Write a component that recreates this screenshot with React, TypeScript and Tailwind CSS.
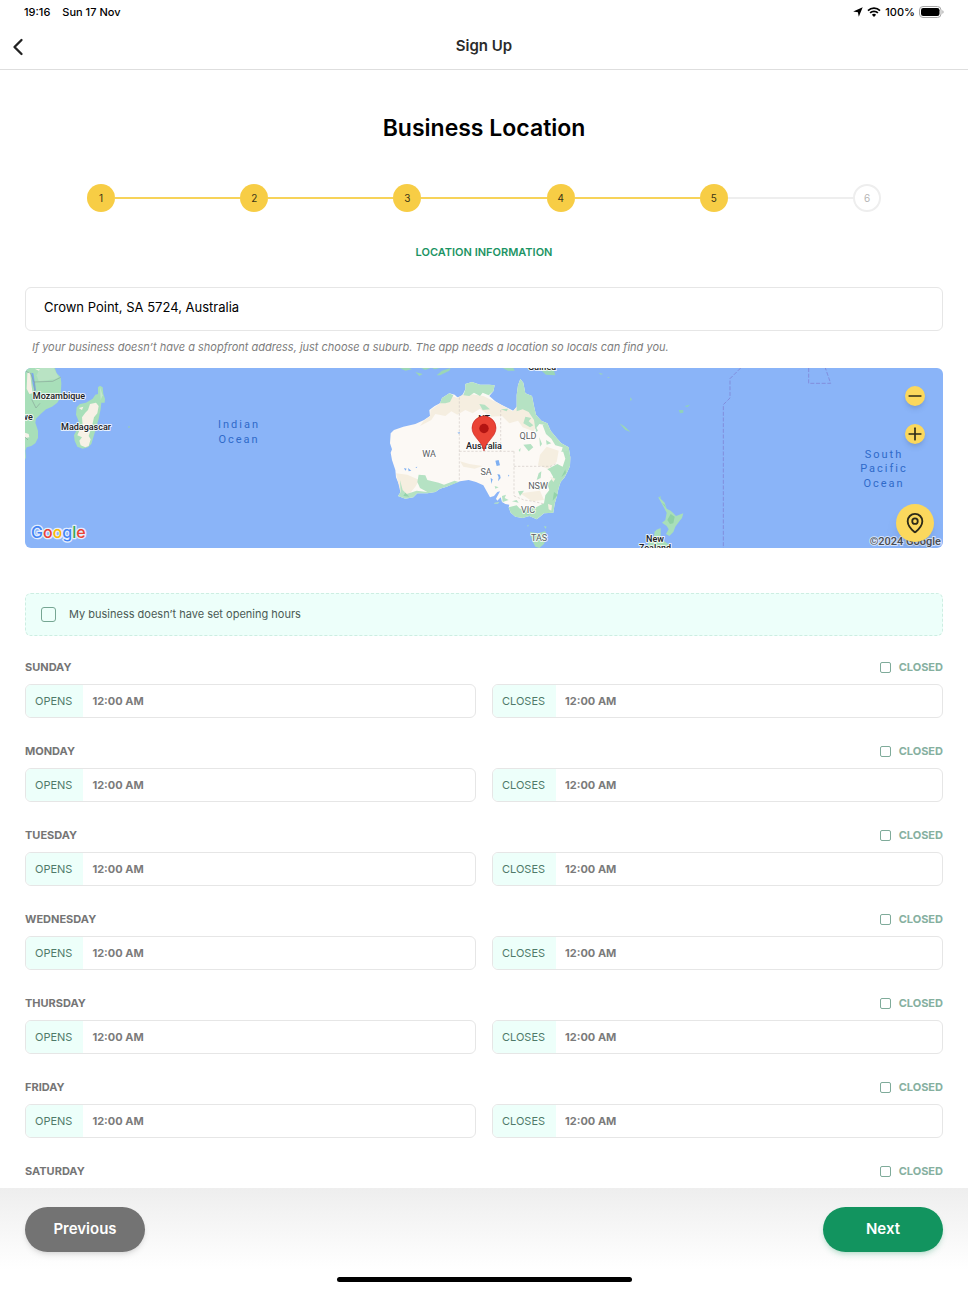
import React, { useState } from "react";
import { ChevronLeft, MapPin, Minus, Plus } from "lucide-react";

const DAYS = [
  "Sunday",
  "Monday",
  "Tuesday",
  "Wednesday",
  "Thursday",
  "Friday",
  "Saturday",
];

const TOTAL_STEPS = 6;
const CURRENT_STEP = 5;

function StatusBar() {
  return (
    <div className="flex h-6 shrink-0 items-center justify-between px-6 text-[11px] font-medium text-black">
      <div className="flex gap-3">
        <span>19:16</span>
        <span>Sun 17 Nov</span>
      </div>
      <div className="flex items-center gap-1">
        <svg width="10" height="10" viewBox="0 0 10 10" aria-hidden="true">
          <path d="M9.700.3 5.800 9.700 4.900 5.200.2 4.500z" fill="#000" />
        </svg>
        <svg width="14" height="10" viewBox="0 0 14 10" aria-hidden="true">
          <path
            d="M1 3.6a8.6 8.6 0 0 1 12 0M3.1 5.9a5.6 5.6 0 0 1 7.8 0"
            fill="none"
            stroke="#000"
            strokeWidth="1.7"
          />
          <path d="M4.9 7.7a3 3 0 0 1 4.2 0L7 9.9z" fill="#000" />
        </svg>
        <span>100%</span>
        <svg width="25" height="12" viewBox="0 0 25 12" aria-hidden="true">
          <rect
            x=".5"
            y=".5"
            width="21.5"
            height="11"
            rx="3.5"
            fill="none"
            stroke="#a8a8a8"
          />
          <rect x="2" y="2" width="18.5" height="8" rx="2.2" fill="#000" />
          <path d="M23.4 4.3v3.4c.8-.3 1.2-1 1.2-1.7s-.4-1.4-1.2-1.7z" fill="#a8a8a8" />
        </svg>
      </div>
    </div>
  );
}

function Stepper() {
  const steps = Array.from({ length: TOTAL_STEPS }, (_, i) => i + 1);

  return (
    <ol className="mt-10 flex items-center px-[62px]">
      {steps.map((step) => {
        const done = step <= CURRENT_STEP;
        return (
          <React.Fragment key={step}>
            {step > 1 && (
              <li
                aria-hidden="true"
                className={`h-0.5 flex-1 ${done ? "bg-[#f7d359]" : "bg-[#eeeeee]"}`}
              />
            )}
            <li
              className={`flex size-7 items-center justify-center rounded-full text-[10px] ${
                done
                  ? "bg-[#f7cd45] text-[#3d3616]"
                  : "border-2 border-[#eeeeee] bg-white text-[#b5b5b5]"
              }`}
            >
              {step}
            </li>
          </React.Fragment>
        );
      })}
    </ol>
  );
}

function MapDrawing() {
  return (
    <svg
      className="block h-full w-full font-[Roboto,sans-serif]"
      viewBox="0 0 918 180"
      preserveAspectRatio="xMidYMid slice"
      role="img"
      aria-label="Map of Australia"
    >
      <rect width="918" height="180" fill="#8ab4f8" />

      {/* Mozambique and Madagascar */}
      <g transform="translate(-5 -88) scale(.33333)">
        <path
          d="M14 262H104L110 280 122 292 124 310 122 350 112 368 96 380 78 388 62 402 48 416 46 428 54 452 54 474 46 490 34 498 20 502 16 512 18 532 14 542z"
          fill="#a8dfb9"
        />
        <path d="M60 264 100 262 116 292 104 298 56 304 50 286z" fill="#b9e3c4" />
        <path d="M22 280 30 276 34 312 38 340 28 342 20 326z" fill="#f5efe4" />
        <path d="M14 458 26 462 28 472 14 474zM44 266 60 268 56 272z" fill="#f8f3ea" />
        <path d="M34 278 40 280 44 304 48 330 44 336 38 312z" fill="#7aa7ee" />
        <path
          d="M18 274 32 280 42 306 98 304 122 292M44 306 44 340 36 360 48 384 60 370M14 470 24 480"
          fill="none"
          stroke="#8aa79a"
          strokeWidth="2"
        />
        <path
          d="M240 317 248 322 250 342 255 356 254 368 244 368 242 388 236 416 226 452 214 492 204 502 188 506 172 500 164 482 162 466 172 446 176 424 168 404 170 382 180 372 198 368 218 356 226 344 234 342 234 322z"
          fill="#a8dfb9"
        />
        <path
          d="M210 372 228 368 236 378 232 400 222 412 218 430 212 450 206 468 212 478 206 498 196 502 182 496 178 482 186 472 172 466 180 448 188 436 186 412 196 398 204 390zM176 384 190 380 186 390z"
          fill="#f7f1e6"
        />
        <path d="M240 322 248 346 242 360z" fill="#c4e6cb" />
        <circle cx="327" cy="441" r="3" fill="#93c9c4" />
      </g>

      {/* Australia, Tasmania and the islands to the north */}
      <g transform="translate(315 -8) scale(.33333)">
        <path
          d="M541 57 550 68 556 100 576 108 582 138 588 164 604 182 622 190 632 212 650 234 664 250 686 262 691 292 690 318 682 336 674 352 662 366 656 384 650 410 644 432 640 458 612 460 600 470 590 478 568 468 548 474 526 470 512 458 506 442 508 434 496 432 486 426 482 412 472 422 468 416 480 394 472 396 462 408 450 412 440 394 430 376 408 366 386 360 360 364 338 372 320 380 300 386 286 396 262 400 232 400 220 412 196 416 174 408 182 396 178 376 168 352 166 330 156 300 152 278 156 268 150 250 152 220 162 210 190 200 226 192 252 180 270 168 268 150 284 138 300 130 306 114 328 100 344 104 352 112 366 108 376 88 376 72 396 66 420 74 448 74 464 76 460 94 448 108 466 124 484 134 504 144 520 152 530 140 530 106 534 76z"
          fill="#fcf9f5"
        />
        <path
          d="M300 130 326 104 352 114 374 100 430 108 468 126 518 154 540 130 580 150 600 186 580 214 548 202 534 182 508 190 486 168 452 170 420 146 398 160 376 150 352 164 334 154 316 168 286 162 274 180 240 198 250 184 270 168 272 150zM168 340 202 344 238 360 226 380 206 404 182 400zM360 304 388 312 428 318 404 326 370 320zM620 260 656 272 650 306 624 326 594 316 600 284zM540 400 600 392 612 420 576 424z"
          fill="#f5eee0"
        />
        <path
          d="M541 57 550 68 556 100 576 108 582 138 588 164 604 182 622 190 620 196 598 192 586 208 582 180 566 156 548 148 530 154 530 106 534 76zM376 88 376 72 396 66 420 74 448 74 464 76 460 94 446 106 428 98 420 108 402 98 388 108 370 106zM300 130 306 114 328 100 340 106 330 126 316 130zM418 132 434 134 450 148 428 150zM482 148 504 146 500 154z"
          fill="#b5e2c3"
        />
        <path
          d="M686 262 691 292 690 318 682 336 674 352 662 366 656 384 650 410 644 432 640 458 612 460 590 478 568 468 548 474 526 470 512 458 506 442 530 436 540 446 584 444 612 430 616 406 628 390 622 372 640 352 630 334 622 328 652 312 668 320 676 296 668 270z"
          fill="#b1e1bf"
        />
        <path
          d="M622 190 632 212 650 234 664 250 686 262 684 272 664 276 668 262 646 256 634 236 618 222 608 196zM180 360 188 390 200 402 230 392 262 396 240 384 232 366 236 344 256 346 262 360 296 368 312 374 344 362 356 366 320 380 300 386 286 396 262 400 232 400 220 412 196 416 174 408 182 396zM556 170 574 174 566 184 580 196 570 202 550 190zM550 254 572 252 580 262 566 274zM596 340 604 334 602 354 590 360zM608 376 588 384 598 390zM486 408 498 404 494 414 506 420 488 426zM534 394 552 392 540 408zM516 424 530 420 536 428zM598 232 606 252 600 260zM618 240 634 250 620 254zM536 270 542 264 540 276zM464 378 476 382 466 386zM586 198 594 212 588 216z"
          fill="#b5e2c3"
        />
        <path
          d="M624 432 636 436 634 452 626 448zM630 350 646 356 640 366z"
          fill="#f5efe2"
        />
        <path
          d="M654 404 638 422 642 396zM664 352 676 328 678 340zM552 462 560 454 568 464zM208 410 190 408 196 398z"
          fill="#93d3aa"
        />
        <path
          d="M466 302 476 300 480 316 470 318zM472 342 480 344 482 354 474 364 476 352zM452 354 458 358 454 372zM438 162 444 164 440 168zM352 218 360 216 358 222zM192 324 200 326 196 332zM204 324 214 332 206 334zM226 322 232 320 230 324zM504 344 508 346 506 350z"
          fill="#7fb0f2"
        />
        <path
          d="M358 112V360M358 274H522M482 150V274M522 274V408M522 319H632L650 310M522 408 552 420 580 424 612 432"
          fill="none"
          stroke="#d2cac6"
          strokeWidth="2"
          strokeDasharray="7 5"
        />
        <path d="M464 428 478 426 474 431 462 431z" fill="#b5e2c3" />
        <path
          d="M570 516 594 520 616 514 620 530 612 552 598 564 586 560 576 540zM612 498 620 500 616 506zM562 496 566 494 564 502z"
          fill="#a8dfb9"
        />
        <path
          d="M180 24H208L216 28 196 32zM226 36 248 42 238 48zM290 46 306 32 332 24 328 32 300 46zM244 24H272L256 30zM276 24H300L284 28zM488 24H520L524 32 504 32zM570 24H640L646 46 618 44 600 28zM870 112 876 118 872 124zM838 190 852 198 872 216 856 210zM776 38 790 42 782 44zM802 50 810 54 804 54zM956 412 962 408 962 424z"
          fill="#9bd6b6"
        />
        <path d="M948 510 962 504V528H946z" fill="#a8dfb9" />
      </g>

      {/* New Zealand, Fiji and the antimeridian */}
      <g transform="translate(615 -8) scale(.33333)">
        <path
          d="M54 410 66 420 74 428 80 446 92 452 100 460 108 468 130 460 126 474 118 484 106 500 100 516 88 528 78 522 86 508 80 498 66 488 76 480 80 458 68 436zM44 514 54 512 52 524 68 540 84 552 94 560V564H20L26 546 42 528z"
          fill="#a8dfb9"
        />
        <path d="M92 462 104 470 100 490 90 492 82 480zM66 428 74 434 78 444z" fill="#8fd1a5" />
        <path
          d="M116 150 130 150 130 158 120 160zM134 138 150 134 142 142z"
          fill="#8fd1bb"
        />
        <g fill="none" stroke="#7f86d6" strokeWidth="2.5" strokeDasharray="12 5">
          <path d="M302 24 270 56V114L250 134V564" />
          <path d="M506 24V70H572L556 24" />
        </g>
      </g>

      <g
        fontSize="9"
        fontWeight="500"
        fill="#202124"
        stroke="#ffffff"
        strokeWidth="2"
        strokeOpacity=".8"
        strokeLinejoin="round"
        paintOrder="stroke"
        textAnchor="middle"
      >
        <text x="34" y="31">Mozambique</text>
        <text x="2" y="52">we</text>
        <text x="61" y="62">Madagascar</text>
        <text x="459" y="54">NT</text>
        <text x="459" y="81">Australia</text>
        <text x="517" y="2">Guinea</text>
        <text x="630" y="174">New</text>
        <text x="630" y="183">Zealand</text>
      </g>
      <g
        fontSize="9"
        fill="#5b5f64"
        stroke="#ffffff"
        strokeWidth="2"
        strokeOpacity=".8"
        strokeLinejoin="round"
        paintOrder="stroke"
        textAnchor="middle"
      >
        <text x="404" y="89">WA</text>
        <text x="503" y="71">QLD</text>
        <text x="461" y="107">SA</text>
        <text x="513" y="121">NSW</text>
        <text x="503" y="145">VIC</text>
        <text x="514" y="173">TAS</text>
      </g>
      <g
        className="tracking-[2px]"
        fontSize="11"
        fill="#2f6ac9"
        textAnchor="middle"
      >
        <text x="214" y="60">Indian</text>
        <text x="214" y="75">Ocean</text>
        <text x="859" y="90">South</text>
        <text x="859" y="104">Pacific</text>
        <text x="859" y="119">Ocean</text>
      </g>

      <path
        d="M459 83C458 74 447 69 447 60a12 12 0 0 1 24 0C471 69 460 74 459 83z"
        fill="#ea4335"
        stroke="#c5221f"
        strokeWidth=".6"
      />
      <circle cx="459" cy="60.5" r="4.7" fill="#b31412" />
    </svg>
  );
}

function LocationMap() {
  return (
    <div className="relative mt-[13px] h-[180px] overflow-hidden rounded-md">
      <MapDrawing />
      <svg
        className="absolute bottom-0.5 left-1"
        width="60"
        height="24"
        viewBox="0 0 60 24"
        role="img"
        aria-label="Google"
      >
        <text
          x="2"
          y="16"
          fontSize="16"
          fontWeight="500"
          stroke="#e4edfd"
          strokeWidth="2.5"
          strokeLinejoin="round"
          paintOrder="stroke"
        >
          <tspan fill="#4285f4">G</tspan>
          <tspan fill="#ea4335">o</tspan>
          <tspan fill="#fbbc04">o</tspan>
          <tspan fill="#4285f4">g</tspan>
          <tspan fill="#34a853">l</tspan>
          <tspan fill="#ea4335">e</tspan>
        </text>
      </svg>
      <svg
        className="absolute right-0 bottom-0 font-[Roboto,sans-serif]"
        width="80"
        height="14"
        viewBox="0 0 80 14"
        role="img"
        aria-label="Copyright Google"
      >
        <text
          x="78"
          y="11"
          fontSize="11"
          fontWeight="500"
          fill="#4a4d52"
          stroke="#d6e4fc"
          strokeWidth="2"
          paintOrder="stroke"
          textAnchor="end"
        >
          ©2024 Google
        </text>
      </svg>
      <div className="absolute top-[18px] right-[18px] flex flex-col gap-[18px]">
        <button
          type="button"
          aria-label="Zoom out"
          className="flex size-5 items-center justify-center rounded-full bg-[#fbd85d] text-[#2d2a18] shadow-md"
        >
          <Minus size={20} strokeWidth={2} className="shrink-0" />
        </button>
        <button
          type="button"
          aria-label="Zoom in"
          className="flex size-5 items-center justify-center rounded-full bg-[#fbd85d] text-[#2d2a18] shadow-md"
        >
          <Plus size={20} strokeWidth={2} className="shrink-0" />
        </button>
      </div>
      <button
        type="button"
        aria-label="Use my location"
        className="absolute right-[9px] bottom-1.5 flex size-[38px] items-center justify-center rounded-full bg-[#fbd85d] text-[#2d2a18] shadow-lg"
      >
        <MapPin size={22} strokeWidth={2} />
      </button>
    </div>
  );
}

function TimeField({ id, label }: { id: string; label: string }) {
  return (
    <div className="flex h-[34px] flex-1 overflow-hidden rounded-md border border-[#e6e6e6] bg-white">
      <label
        htmlFor={id}
        className="flex items-center bg-[#edfffa] pr-[11px] pl-[9px] text-[11px] text-[#4f7a69]"
      >
        {label}
      </label>
      <input
        id={id}
        type="text"
        defaultValue="12:00 AM"
        className="min-w-0 flex-1 px-[9px] text-[11px] font-bold text-[#7b7b7b] outline-none"
      />
    </div>
  );
}

function DayHours({ day }: { day: string }) {
  const [closed, setClosed] = useState(false);
  const key = day.toLowerCase();

  return (
    <section className="h-[84px]">
      <div className="flex h-4 items-center justify-between">
        <h3 className="text-[11px] font-bold text-[#757575] uppercase">{day}</h3>
        <label className="flex items-center gap-2 text-[11px] font-bold text-[#86b09f]">
          <input
            type="checkbox"
            checked={closed}
            onChange={(e) => setClosed(e.target.checked)}
            className="size-[11px] appearance-none rounded-xs border border-[#7fab9a] bg-white checked:bg-[#12945f]"
          />
          CLOSED
        </label>
      </div>
      <div className="mt-[9px] flex gap-4">
        <TimeField id={`${key}-opens`} label="OPENS" />
        <TimeField id={`${key}-closes`} label="CLOSES" />
      </div>
    </section>
  );
}

export default function App() {
  const [address, setAddress] = useState("Crown Point, SA 5724, Australia");
  const [noSetHours, setNoSetHours] = useState(false);

  return (
    <div className="flex h-screen flex-col overflow-hidden bg-white font-[Inter,sans-serif]">
      <StatusBar />

      <header className="grid h-[46px] shrink-0 grid-cols-[40px_1fr_40px] items-center border-b border-[#dedede]">
        <button
          type="button"
          aria-label="Back"
          className="flex size-9 items-center justify-center text-[#222222]"
        >
          <ChevronLeft size={28} strokeWidth={2} />
        </button>
        <h1 className="text-center text-[15px] font-semibold text-[#2b2b2b]">Sign Up</h1>
      </header>

      <main className="min-h-0 flex-1 overflow-hidden px-[25px]">
        <h2 className="mt-[42px] text-center text-[23px] leading-8 font-semibold text-black">
          Business Location
        </h2>

        <Stepper />

        <h3 className="mt-8 text-center text-[11px] leading-4 font-semibold text-[#1c9464]">
          LOCATION INFORMATION
        </h3>

        <input
          type="text"
          aria-label="Business address"
          value={address}
          onChange={(e) => setAddress(e.target.value)}
          className="mt-[27px] block h-11 w-full rounded-md border border-[#e6e6e6] px-[18px] pb-1 text-[13px] text-black outline-none"
        />
        <p className="mt-2 px-[7px] text-[11px] leading-4 text-[#7d7d7d] italic">
          If your business doesn’t have a shopfront address, just choose a suburb. The app
          needs a location so locals can find you.
        </p>

        <LocationMap />

        <label className="mt-[45px] flex h-[43px] items-center gap-[13px] rounded-md border border-dashed border-[#cdeee2] bg-[#edfffa] px-[15px] text-[11px] text-[#4a5a54]">
          <input
            type="checkbox"
            checked={noSetHours}
            onChange={(e) => setNoSetHours(e.target.checked)}
            className="size-[15px] appearance-none rounded-[3px] border border-[#76a693] checked:bg-[#12945f]"
          />
          My business doesn’t have set opening hours
        </label>

        <div className="mt-[23px]">
          {DAYS.map((day) => (
            <DayHours key={day} day={day} />
          ))}
        </div>
      </main>

      <footer className="flex h-[102px] shrink-0 flex-col items-center justify-between bg-linear-to-b from-[#eeeeee] to-white to-80% px-[25px] pt-[19px] pb-2">
        <div className="flex w-full justify-between">
          <button
            type="button"
            className="h-[45px] w-[120px] rounded-full bg-[#737373] text-[15px] font-semibold text-white shadow-md"
          >
            Previous
          </button>
          <button
            type="button"
            className="h-[45px] w-[120px] rounded-full bg-[#12945f] text-[15px] font-semibold text-white shadow-md shadow-[#12945f]/20"
          >
            Next
          </button>
        </div>
        <div className="h-[5px] w-[295px] rounded-full bg-black" />
      </footer>
    </div>
  );
}
